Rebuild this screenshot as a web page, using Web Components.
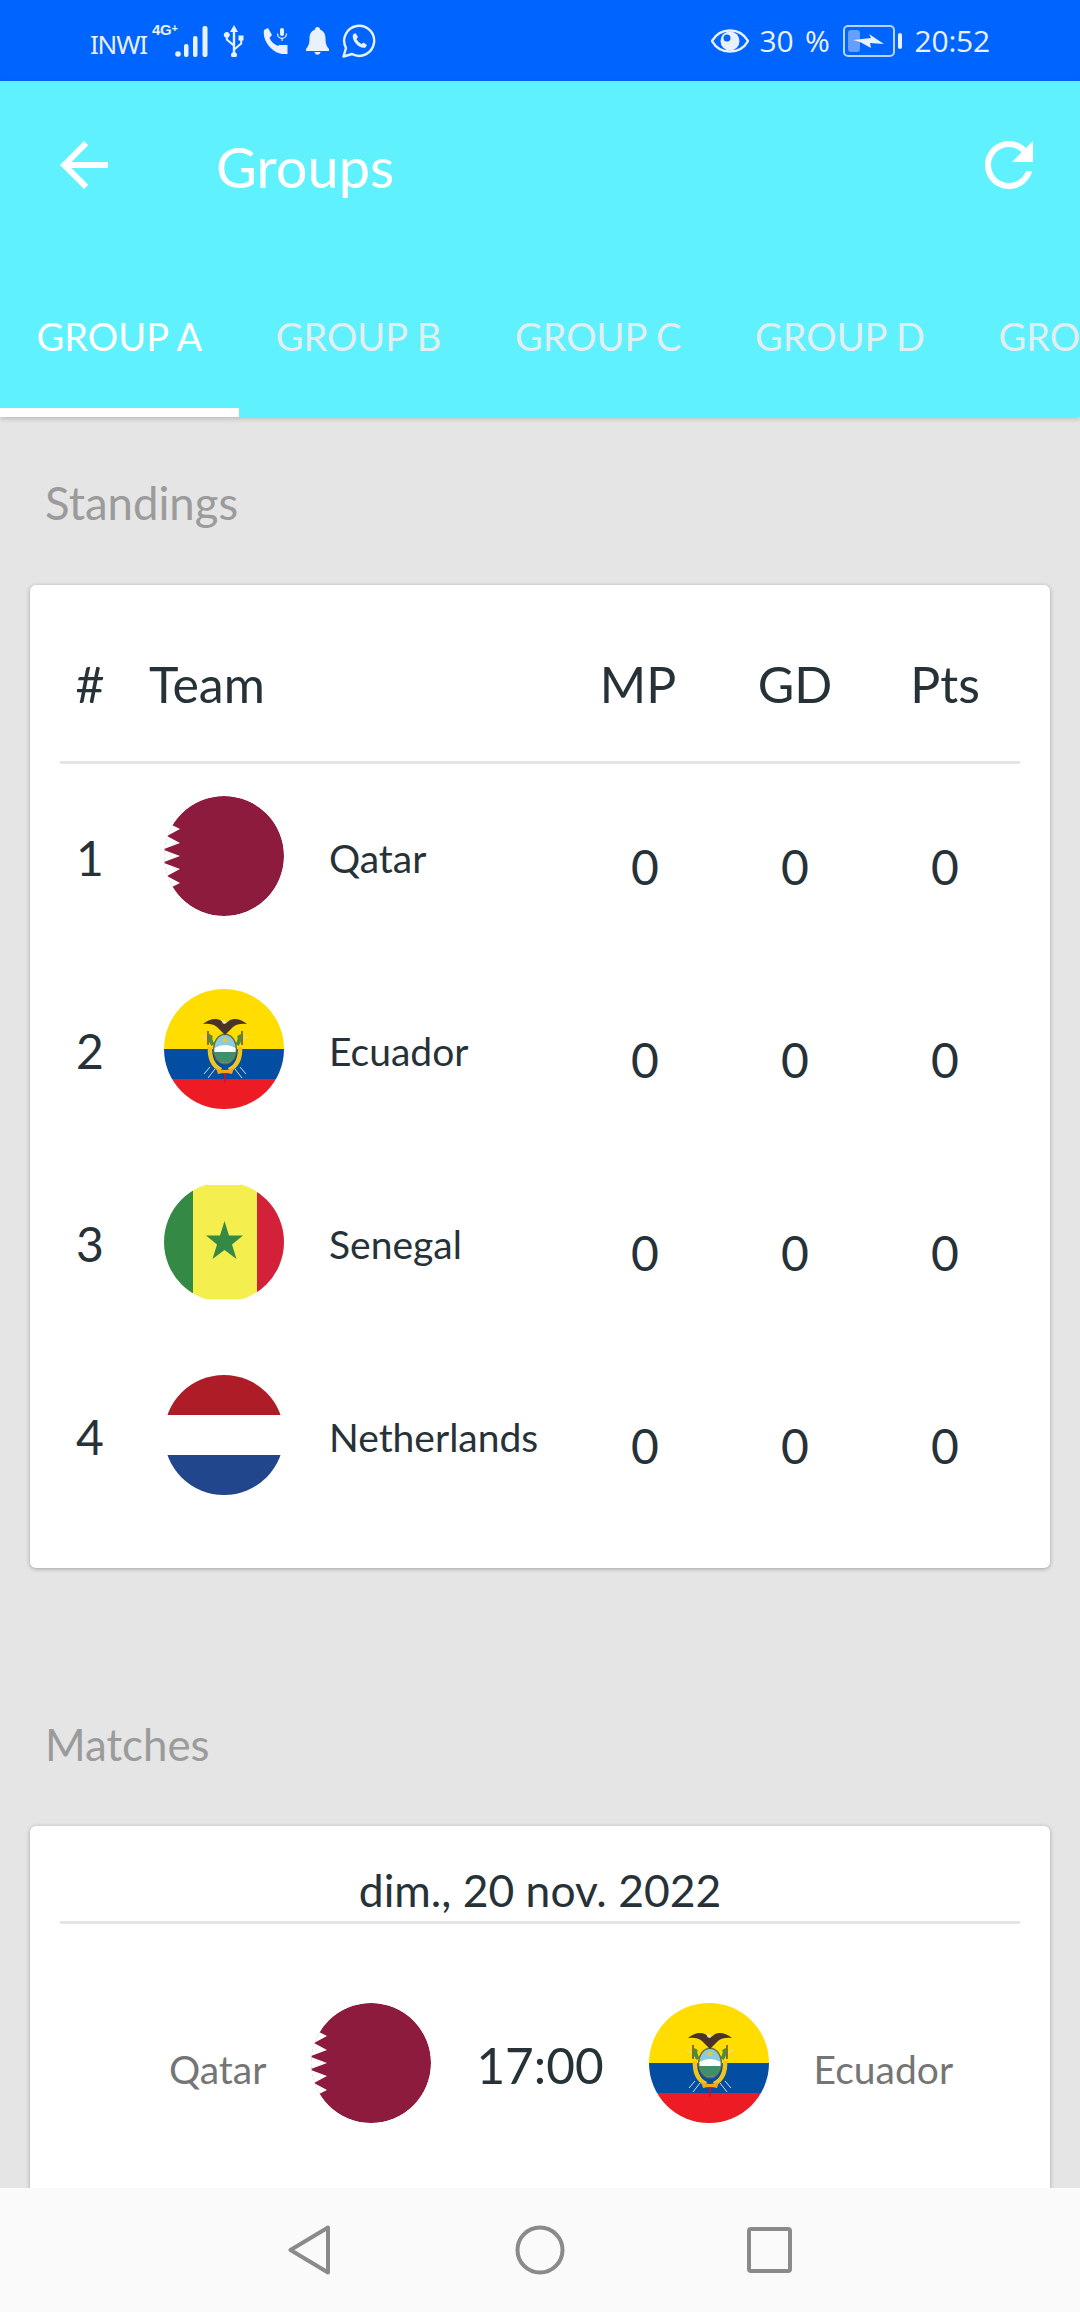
<!DOCTYPE html>
<html lang="en"><head><meta charset="utf-8"><title>Groups</title>
<style>
html,body{margin:0;padding:0;background:#e5e5e5}
body{width:1080px;height:2312px;overflow:hidden;display:flex;flex-direction:column;font-family:Lato,"Noto Sans",sans-serif;color:#263238}
</style></head>
<body>
<status-bar></status-bar>
<app-bar title="Groups"></app-bar>
<page-content>
  <section-label style="font-size:45.500px">Standings</section-label>
  <standings-card>
    <standing-row rank="1" team="Qatar" flag="qa"></standing-row>
    <standing-row rank="2" team="Ecuador" flag="ec"></standing-row>
    <standing-row rank="3" team="Senegal" flag="sn"></standing-row>
    <standing-row rank="4" team="Netherlands" flag="nl"></standing-row>
  </standings-card>
  <section-label style="margin-top:90px;font-size:43.800px">Matches</section-label>
  <match-card date="dim., 20 nov. 2022" home="Qatar" homeflag="qa" time="17:00" away="Ecuador" awayflag="ec"></match-card>
</page-content>
<nav-bar></nav-bar>
<script>
function def(name, css, html){
  customElements.define(name, class extends HTMLElement{
    connectedCallback(){
      if(this.shadowRoot) return;
      const a=n=>this.getAttribute(n)||'';
      const r=this.attachShadow({mode:'open'});
      r.innerHTML='<style>'+css+'</style>'+(typeof html==='function'?html(a):html);
    }
  });
}
const FLAGS={
qa:`<circle cx="60" cy="60" r="60" fill="#8d1b3d"/><path fill="#fff" d="M-2 29L8 29L16 33L3 40L16 47L-1 53.500L16 60L-1 66.500L16 73L3 80L16 87L8 91L-2 91Z"/>`,
nl:`<rect width="120" height="40" fill="#ae1c28"/><rect y="40" width="120" height="40" fill="#fff"/><rect y="80" width="120" height="40" fill="#21468b"/>`,
sn:`<rect width="29" height="120" fill="#348a45"/><rect x="29" width="64" height="120" fill="#f5ee4f"/><rect x="93" width="27" height="120" fill="#d3213a"/><path fill="#348a45" d="M60.500 39L65 53.500L79 53.500L68 62.500L72.500 77L60.500 68L48.500 77L53 62.500L42 53.500L56 53.500Z"/><rect width="120" height="3" fill="#fff"/><rect y="117" width="120" height="3" fill="#fff"/>`,
ec:`<rect width="120" height="60" fill="#ffdd00"/><rect y="60" width="120" height="30" fill="#034ea2"/><rect y="90" width="120" height="30" fill="#ed1c24"/>
<g fill="none"><path d="M43 50L38 47M79 50L84 47M46 78L40 85M76 78L82 85M51 80L44 89M71 80L78 89" stroke="#d8dcd8" stroke-width="1"/>
<path d="M44 42V56M78 42V56" stroke="#7a4a2a" stroke-width="1.600"/>
<path d="M46 58Q45 75 57 81M76 58Q77 75 65 81" stroke="#f2c51e" stroke-width="4.500"/>
<path d="M49 56Q45 50 47 46M73 56Q77 50 75 46" stroke="#4b8f3c" stroke-width="4"/></g>
<path fill="#c8102e" d="M59.500 82h3l-1 12h-1z"/>
<ellipse cx="61" cy="60" rx="12" ry="15.500" fill="#6f6a3a"/>
<ellipse cx="61" cy="60" rx="10.500" ry="14" fill="#8ccbdc"/>
<path fill="#fff" d="M50.500 59Q61 53 71.500 59V63H50.500Z"/>
<path fill="#3f8f6a" d="M50.600 63H71.400Q70 73 61 74Q52 73 50.600 63Z"/>
<circle cx="61" cy="51" r="2.200" fill="#f4c62b"/>
<path fill="#f2a81d" d="M52 79Q61 83 70 79L68 85Q61 83 54 85Z"/>
<path fill="#4a3426" d="M39 35Q48 28 56 31L61 35L66 31Q74 28 83 35Q74 34 69 38Q64 43 61 46Q58 43 53 38Q48 34 39 35Z"/>
<circle cx="60" cy="33" r="1.800" fill="#e8e4da"/>`
};
let fid=0;
def('flag-icon',':host{display:block;width:120px;height:120px;flex:none}svg{display:block}',a=>{
  const id='c'+(++fid), c=a('code');
  return `<svg width="120" height="120" viewBox="0 0 120 120" role="img" aria-label="${c}"><defs><clipPath id="${id}"><circle cx="60" cy="60" r="60"/></clipPath></defs><g clip-path="url(#${id})">${FLAGS[c]}</g></svg>`;
});

def('status-bar',`
:host{display:flex;flex:none;height:81px;background:#0064ff;color:#e9f1ff;align-items:center;justify-content:space-between;padding:0 90px 0 90px;box-sizing:border-box;font-family:"Open Sans",sans-serif}
.g{display:flex;align-items:center}
svg{display:block;flex:none}
.op{font-size:26px;line-height:1;font-family:"Noto Sans",sans-serif;letter-spacing:-1.200px;margin-top:6px;width:56px}
.t{font-size:30px;line-height:1;font-family:"Open Sans",sans-serif;letter-spacing:-.2px}
.net{position:relative;width:58px;height:32px;margin-left:4px}
.net b{position:absolute;left:2px;top:-3px;font:700 15px/1 "Liberation Sans",sans-serif;letter-spacing:-.3px;white-space:nowrap}
.net small{font-size:11px;vertical-align:3px}
`,`
<div class="g">
  <span class="op">INWI</span>
  <span class="net"><b>4G<small>+</small></b><svg style="position:absolute;left:25px;top:0" width="34" height="32" viewBox="0 0 34 32" fill="#e9f1ff"><circle cx="3" cy="29" r="2.800"/><rect x="9" y="19" width="4.500" height="13" rx="2"/><rect x="18" y="11" width="4.500" height="21" rx="2"/><rect x="27.500" y="1" width="5" height="31" rx="2"/></svg></span>
  <svg style="margin-left:15px" width="22" height="32" viewBox="0 0 22 32" fill="#e9f1ff"><path d="M11 0L15 7H12.200V22.500L17.200 18V15.500H15.500V10.500H20.500V15.500H19.200V19L12.200 25V27.300A3 3 0 1 1 9.800 27.300V21L2.800 15V12.800A3 3 0 1 1 4.800 12.800V14L9.800 18.300V7H7Z"/></svg>
  <svg style="margin-left:18px" width="26" height="28" viewBox="0 0 26 28" fill="#e9f1ff"><path d="M1 3L5 1L9 8L6.500 11C8 14.500 11 17.500 15 19L16 18H24.500V27H21C10 27 -1 14 1 3Z"/><rect x="17" y="1" width="4" height="8" rx="2"/><path d="M14.500 6.500C14.500 13 23.500 13 23.500 6.500" fill="none" stroke="#e9f1ff" stroke-width="1.200"/><rect x="18.500" y="11" width="1.200" height="3"/></svg>
  <svg style="margin-left:17px" width="23" height="28" viewBox="0 0 23 28" fill="#e9f1ff"><path d="M11.500 0A2.500 2.500 0 0 1 14 2.500C18 4 19.500 7.500 19.500 11C19.500 16 20 18.500 23 22V24H0V22C3 18.500 3.500 16 3.500 11C3.500 7.500 5 4 9 2.500A2.500 2.500 0 0 1 11.500 0ZM8.500 25H14.500C14 28.500 9 28.500 8.500 25Z"/></svg>
  <svg style="margin-left:13px" width="34" height="34" viewBox="0 0 34 34"><path d="M1.500 32.500L4 24A15 15 0 1 1 10 30Z" fill="none" stroke="#e9f1ff" stroke-width="2.400" stroke-linejoin="round"/><path d="M11 10.500L13.500 9L16 13L14.500 15C15.500 17 17.500 19 19.500 20L21.500 18.500L25 21L23.500 23.500C18 25.500 9 17 11 10.500Z" fill="#e9f1ff"/></svg>
</div>
<div class="g">
  <svg width="38" height="26" viewBox="0 0 38 26"><path d="M1 13C9 -1 29 -1 37 13C29 27 9 27 1 13Z" fill="none" stroke="#e9f1ff" stroke-width="2.400"/><circle cx="19" cy="13" r="9.500" fill="#e9f1ff"/><circle cx="16" cy="10" r="3.500" fill="#0064ff"/></svg>
  <span class="t" style="margin-left:11px;width:73px;word-spacing:4px;white-space:nowrap">30 %</span>
  <svg style="margin-left:10px" width="59" height="32" viewBox="0 0 59 32"><rect x="1" y="1" width="50" height="30" rx="4" fill="none" stroke="#b9d2ff" stroke-width="2"/><rect x="5" y="5" width="12" height="22" rx="3" fill="#669fff"/><path d="M10 15L28 13L26 9L41 19L27 18L28 23L17 17Z" fill="#e9f1ff"/><rect x="55" y="8" width="4" height="16" rx="2" fill="#e9f1ff"/></svg>
  <span class="t" style="margin-left:13px">20:52</span>
</div>`);

def('app-bar',`
:host{display:block;flex:none;height:336px;background:#60f1ff;color:#fff;box-shadow:0 2px 5px rgba(0,0,0,.18);position:relative;z-index:1;overflow:hidden}
.top{display:flex;align-items:center;height:168px;padding:0 47px 0 60px;box-sizing:border-box}
.title{flex:1;font-size:56px;line-height:1;margin-left:108px;padding-top:4px}
svg{display:block;flex:none}
`,a=>`
<div class="top">
  <svg width="48" height="48" viewBox="4 4 16 16" fill="#fff"><path d="M20 11H7.830l5.590-5.590L12 4l-8 8 8 8 1.410-1.410L7.830 13H20v-2z"/></svg>
  <span class="title">${a('title')}</span>
  <svg width="48" height="48" viewBox="4 4 16 16" fill="#fff"><path d="M17.650 6.350C16.200 4.900 14.210 4 12 4c-4.420 0-7.990 3.580-7.990 8s3.570 8 7.990 8c3.730 0 6.840-2.550 7.730-6h-2.080c-.82 2.330-3.040 4-5.650 4-3.310 0-6-2.690-6-6s2.690-6 6-6c1.660 0 3.140.69 4.220 1.780L13 11h7V4l-2.350 2.350z"/></svg>
</div>
<tab-strip></tab-strip>`);

def('tab-strip',`
:host{display:flex;height:168px;box-sizing:border-box;white-space:nowrap}
tab-item{flex:none}
`,`<tab-item active label="GROUP A"></tab-item><tab-item label="GROUP B"></tab-item><tab-item label="GROUP C"></tab-item><tab-item label="GROUP D"></tab-item><tab-item label="GROUP E"></tab-item>`);

def('tab-item',`
:host{display:block;height:168px;box-sizing:border-box;padding:64px 37px 0 36.500px;font-size:38px;line-height:46px;position:relative}
span{color:#e3eef0}
:host([active]) span{color:#fff}
:host([active])::after{content:"";position:absolute;left:0;right:0;bottom:0;height:9px;background:#fff}
`,a=>`<span>${a('label')}</span>`);

def('page-content',`
:host{display:block;flex:1;min-height:0;overflow:hidden;padding:0 30px}
`,`<slot></slot>`);

def('section-label',`
:host{display:block;color:#9b9b9b;font-size:45px;line-height:50px;padding:61px 0 57px 15px}
`,`<slot></slot>`);

const GRID='display:grid;grid-template-columns:60px 1fr 150px 150px 150px;align-items:center;';
def('standings-card',`
:host{display:block;background:#fff;border-radius:6px;box-shadow:0 1px 4px rgba(0,0,0,.3);padding:0 30px 73px}
.head{${GRID}height:179px;box-sizing:border-box;padding-top:22px;border-bottom:3px solid #e5e5e5;font-size:50px;line-height:1;margin-bottom:32px}
.head span{text-align:center}
.team{padding-left:29px;text-align:left!important}
.mp{padding-right:14px}
::slotted(standing-row:not(:last-child)){margin-bottom:73px}
`,`<div class="head"><span>#</span><span class="team">Team</span><span class="mp">MP</span><span>GD</span><span>Pts</span></div><slot></slot>`);

def('standing-row',`
:host{${GRID}height:120px}
.rank{font-size:48px;line-height:1;text-align:center;padding-top:3px}
.team{display:flex;align-items:center;gap:45px;padding-left:44px;font-size:39px;min-width:0;white-space:nowrap}
.team span{padding-top:3px}
.n{font-size:48px;line-height:1;text-align:center;padding-top:21px}
`,a=>`<span class="rank">${a('rank')}</span><span class="team"><flag-icon code="${a('flag')}"></flag-icon><span>${a('team')}</span></span><span class="n">0</span><span class="n">0</span><span class="n">0</span>`);

def('match-card',`
:host{display:block;background:#fff;border-radius:6px;box-shadow:0 1px 4px rgba(0,0,0,.3);padding:0 30px 80px}
.date{border-bottom:3px solid #e5e5e5;text-align:center;font-size:44.400px;line-height:50px;box-sizing:border-box;height:98px;padding-top:39px}
.row{display:grid;grid-template-columns:1fr auto 1fr;column-gap:45px;align-items:center;margin-top:79px}
.s{display:flex;align-items:center;gap:45px;font-size:39px;color:#757575}
.s.l{justify-content:flex-end}
.s span{padding-top:12px}
.time{font-size:49.500px;line-height:1;padding-top:6px}
`,a=>`<div class="date">${a('date')}</div>
<div class="row"><div class="s l"><span>${a('home')}</span><flag-icon code="${a('homeflag')}"></flag-icon></div><span class="time">${a('time')}</span><div class="s"><flag-icon code="${a('awayflag')}"></flag-icon><span>${a('away')}</span></div></div>`);

def('nav-bar',`
:host{display:flex;flex:none;height:124px;background:#fafafa;align-items:center;justify-content:center;position:relative;z-index:2}
svg{display:block;flex:none}
`,`
<svg width="42" height="50" viewBox="0 0 42 50" fill="none" stroke="#8a8a8a" stroke-width="4" stroke-linejoin="round"><path d="M40 2.500V47.500L2.500 25Z"/></svg>
<svg style="margin-left:185px" width="50" height="50" viewBox="0 0 50 50" fill="none" stroke="#8a8a8a" stroke-width="4"><circle cx="25" cy="25" r="22.500"/></svg>
<svg style="margin-left:182px" width="45" height="46" viewBox="0 0 45 46" fill="none" stroke="#8a8a8a" stroke-width="4" stroke-linejoin="round"><rect x="2" y="2" width="41" height="42" rx="2"/></svg>`);
</script>
</body></html>
